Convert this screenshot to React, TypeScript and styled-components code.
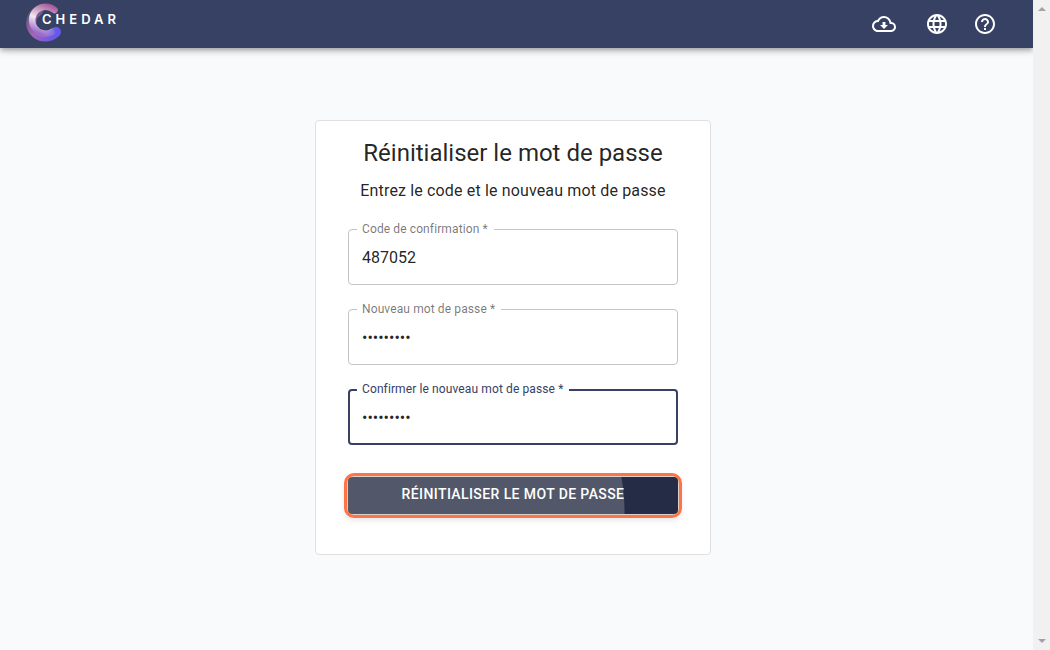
import React from "react";
import styled, { createGlobalStyle, css } from "styled-components";
import { MdHelpOutline, MdLanguage, MdOutlineCloudDownload } from "react-icons/md";

const GlobalStyle = createGlobalStyle`
  *, *::before, *::after { box-sizing: border-box; }
  body {
    margin: 0;
    background: #f9fafc;
    color: rgba(0, 0, 0, 0.87);
    font-family: Roboto, "Liberation Sans", sans-serif;
  }
`;

const Shell = styled.div`
  display: flex;
  min-height: 100vh;
`;

const Page = styled.div`
  flex: 1;
  min-width: 0;
  display: flex;
  flex-direction: column;
`;

const TopBar = styled.header`
  display: flex;
  align-items: center;
  justify-content: space-between;
  height: 48px;
  padding: 0 36px 0 24px;
  background: #364164;
  color: #fff;
  box-shadow: 0 2px 4px -1px rgba(0, 0, 0, 0.2), 0 4px 5px 0 rgba(0, 0, 0, 0.14),
    0 1px 10px 0 rgba(0, 0, 0, 0.12);
  clip-path: inset(0 0 -16px 0);
`;

const LogoLink = styled.a`
  display: block;
  height: 48px;

  svg { display: block; }
`;

const Actions = styled.nav`
  display: flex;
  gap: 24px;
`;

const IconButton = styled.button<{ $wide?: boolean }>`
  display: flex;
  padding: 0;
  margin-right: ${(p) => (p.$wide ? "5px" : "0")};
  border: 0;
  background: none;
  color: inherit;
  font-size: 24px;
  cursor: pointer;
`;

const Main = styled.main`
  display: flex;
  justify-content: center;
  padding: 72px 7px 24px 0;
`;

const Card = styled.form`
  width: 100%;
  max-width: 396px;
  padding: 16px 32px 40px;
  border: 1px solid #e0e0e0;
  border-radius: 4px;
  background: #fff;
`;

const Title = styled.h1`
  margin: 0;
  font-size: 24px;
  line-height: 32px;
  font-weight: 400;
  text-align: center;
`;

const Subtitle = styled.p`
  margin: 10px 0 26px;
  font-size: 16px;
  line-height: 24px;
  letter-spacing: 0.00938em;
  text-align: center;
`;

const Field = styled.div`
  position: relative;
  margin-bottom: 24px;
`;

const FieldLabel = styled.label<{ $active?: boolean }>`
  position: absolute;
  top: -8px;
  left: 9px;
  padding: 0 6px 0 5px;
  background: #fff;
  color: ${(p) => (p.$active ? "#364164" : "rgba(0, 0, 0, 0.54)")};
  font-size: 12px;
  line-height: 16px;
  letter-spacing: 0.00938em;
`;

const FieldInput = styled.input<{ $active?: boolean }>`
  display: block;
  width: 100%;
  height: 56px;
  padding: 0 13px;
  border: 1px solid #c4c4c4;
  border-radius: 4px;
  outline: 0;
  background: #fff;
  color: rgba(0, 0, 0, 0.87);
  font-family: inherit;
  font-size: 16px;
  ${(p) =>
    p.$active &&
    css`
      padding: 0 12px;
      border: 2px solid #364164;
    `}
`;

const SubmitButton = styled.button`
  position: relative;
  display: block;
  width: 100%;
  height: 37px;
  margin-top: 32px;
  padding: 0 16px 3px;
  border: 0;
  border-radius: 4px;
  overflow: visible;
  background: radial-gradient(circle 210px at 67px 36px, #525869 0 209px, #252d46 210px);
  box-shadow: 0 0 0 1px #d8d2d2, 0 3px 6px 3px rgba(0, 0, 0, 0.1);
  color: #fff;
  font-family: inherit;
  font-size: 14px;
  line-height: 24px;
  font-weight: 500;
  letter-spacing: 0.02857em;
  text-transform: uppercase;
  cursor: pointer;

  &::after {
    content: "";
    position: absolute;
    inset: -4px;
    border: 3px solid #ff7442;
    border-radius: 10px;
  }
`;

const ScrollTrack = styled.div`
  display: flex;
  flex-direction: column;
  justify-content: space-between;
  align-items: center;
  width: 17px;
  padding: 6px 0;
  background: #f1f1f1;

  svg { display: block; fill: #a3a3a3; }
`;

function Logo() {
  return (
    <svg width="100" height="48" viewBox="24 0 100 48" role="img" aria-label="Chedar">
      <defs>
        <linearGradient id="outer" x1="36" y1="5" x2="58" y2="38" gradientUnits="userSpaceOnUse">
          <stop offset="0" stopColor="#8b7a9c" stopOpacity="0.15" />
          <stop offset="0.3" stopColor="#8f5f9e" stopOpacity="0.9" />
          <stop offset="0.6" stopColor="#a565b8" />
          <stop offset="1" stopColor="#6658ea" />
        </linearGradient>
        <linearGradient id="inner" x1="57" y1="8" x2="46" y2="36" gradientUnits="userSpaceOnUse">
          <stop offset="0" stopColor="#a85c9e" />
          <stop offset="0.3" stopColor="#cfa6c8" />
          <stop offset="0.55" stopColor="#f0e8f2" />
          <stop offset="0.8" stopColor="#c3a3dc" />
          <stop offset="1" stopColor="#9a6ccc" />
        </linearGradient>
        <linearGradient id="tail" x1="46" y1="36" x2="57" y2="32" gradientUnits="userSpaceOnUse">
          <stop offset="0" stopColor="#6658ea" stopOpacity="0" />
          <stop offset="1" stopColor="#6658ea" />
        </linearGradient>
      </defs>
      <path
        d="M38 10.6A14 14 0 1 0 55 32.6"
        fill="none"
        stroke="url(#outer)"
        strokeWidth="10"
        strokeLinecap="round"
      />
      <path
        d="M54.5 10A13.5 13.5 0 1 0 52 32"
        fill="none"
        stroke="url(#inner)"
        strokeWidth="6.5"
        strokeLinecap="round"
      />
      <path
        d="M45 36Q52 36 56 32"
        fill="none"
        stroke="url(#tail)"
        strokeWidth="10"
        strokeLinecap="round"
      />
      <text
        x="42"
        y="24"
        fill="#fff"
        fontFamily="Inter, sans-serif"
        fontSize="13"
        fontWeight="600"
        letterSpacing="4"
      >
        CHEDAR
      </text>
    </svg>
  );
}

interface TextFieldProps {
  id: string;
  label: string;
  value: string;
  type?: string;
  active?: boolean;
}

function TextField({ id, label, value, type = "text", active }: TextFieldProps) {
  return (
    <Field>
      <FieldInput id={id} type={type} defaultValue={value} required $active={active} />
      <FieldLabel htmlFor={id} $active={active}>
        {label} *
      </FieldLabel>
    </Field>
  );
}

export default function App() {
  return (
    <>
      <GlobalStyle />
      <Shell>
        <Page>
          <TopBar>
            <LogoLink href="#">
              <Logo />
            </LogoLink>
            <Actions>
              <IconButton type="button" aria-label="Télécharger" $wide>
                <MdOutlineCloudDownload />
              </IconButton>
              <IconButton type="button" aria-label="Langue">
                <MdLanguage />
              </IconButton>
              <IconButton type="button" aria-label="Aide">
                <MdHelpOutline />
              </IconButton>
            </Actions>
          </TopBar>
          <Main>
            <Card onSubmit={(e) => e.preventDefault()}>
              <Title>Réinitialiser le mot de passe</Title>
              <Subtitle>Entrez le code et le nouveau mot de passe</Subtitle>
              <TextField id="code" label="Code de confirmation" value="487052" />
              <TextField id="password" label="Nouveau mot de passe" value="motpasse1" type="password" />
              <TextField
                id="confirm"
                label="Confirmer le nouveau mot de passe"
                value="motpasse1"
                type="password"
                active
              />
              <SubmitButton type="submit">Réinitialiser le mot de passe</SubmitButton>
            </Card>
          </Main>
        </Page>
        <ScrollTrack aria-hidden="true">
          <svg width="8" height="5" viewBox="0 0 8 5">
            <path d="M0 5L4 1L8 5Z" />
          </svg>
          <svg width="8" height="5" viewBox="0 0 8 5">
            <path d="M0 0L4 4L8 0Z" />
          </svg>
        </ScrollTrack>
      </Shell>
    </>
  );
}
